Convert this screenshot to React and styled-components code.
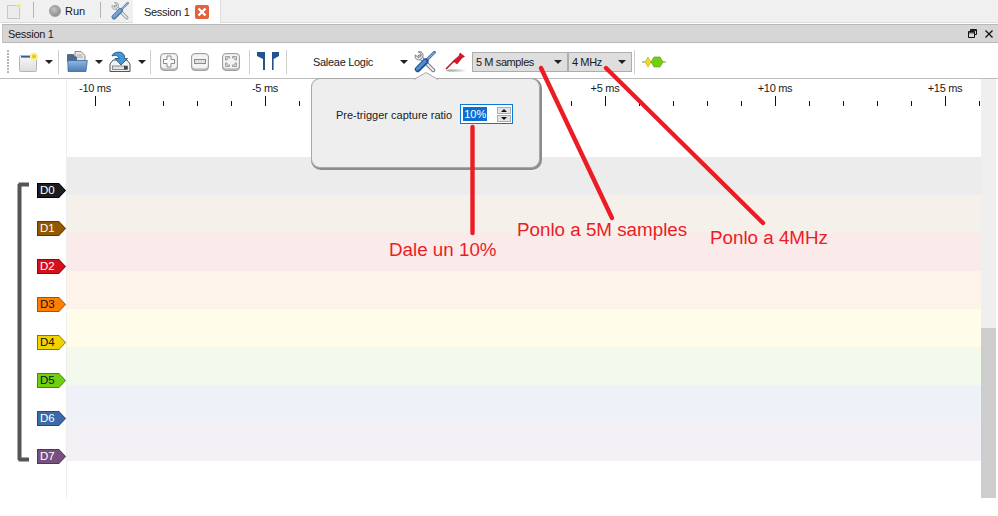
import React from 'react';
import styled, { createGlobalStyle } from 'styled-components';

const GlobalStyle = createGlobalStyle`
  html, body {
    margin: 0;
    padding: 0;
    background: #fff;
  }
  body {
    font-family: "Liberation Sans", Arial, sans-serif;
    font-size: 11px;
    color: #1a1a1a;
  }
`;

const Page = styled.div`
  position: relative;
  width: 998px;
  height: 516px;
  overflow: hidden;
  background: #fff;
`;

/* tab bar */
const TabBar = styled.div`
  display: flex;
  align-items: stretch;
  height: 22px;
  padding-left: 2px;
  background: #f0f0f0;
  border-bottom: 1px solid #dcdcdc;
`;
const TabIcon = styled.div`
  display: flex;
  align-items: center;
  width: ${p => p.$w}px;
  padding-left: ${p => p.$pad || 0}px;
  box-sizing: border-box;
`;
const TabSep = styled.div`
  width: 1px;
  height: 16px;
  margin: 2px 0 0;
  background: #b4b4b4;
`;
const RunTab = styled.div`
  display: flex;
  align-items: center;
  gap: 4px;
  width: 66px;
  padding-left: 15px;
  box-sizing: border-box;
`;
const ActiveTab = styled.div`
  display: flex;
  align-items: center;
  gap: 5px;
  width: 88px;
  height: 23px;
  padding-left: 11px;
  box-sizing: border-box;
  letter-spacing: -0.3px;
  background: #fff;
  border-right: 1px solid #dcdcdc;
`;
const RunDot = styled.span`
  width: 12px;
  height: 12px;
  border-radius: 50%;
  background: radial-gradient(circle at 40% 35%, #c4c4c4, #7c7c7c);
  border: 1px solid #a0a0a0;
  box-sizing: border-box;
`;
const CloseBox = styled.span`
  display: flex;
  align-items: center;
  justify-content: center;
  width: 14px;
  height: 14px;
  border-radius: 2px;
  background: #e2623c;
`;

/* session header */
const SessionBar = styled.div`
  display: flex;
  align-items: center;
  justify-content: space-between;
  height: 17px;
  margin: 1px 0 0 2px;
  padding: 0 5px 0 5px;
  letter-spacing: -0.3px;
  background: #d6d6d6;
  border-top: 1px solid #b8b8b8;
  border-bottom: 1px solid #b8b8b8;
  border-left: 1px solid #c4c4c4;
`;
const WindowBtns = styled.div`
  display: flex;
  align-items: center;
  gap: 8px;
`;

/* toolbar */
const Toolbar = styled.div`
  display: flex;
  align-items: center;
  height: 33px;
  padding-top: 2px;
  border-bottom: 1px solid #bdbdbd;
`;
const Grip = styled.div`
  width: 2px;
  height: 24px;
  margin: 0 10px 0 7px;
  background: repeating-linear-gradient(to bottom, #b5b5b5 0 2px, transparent 2px 3px);
`;
const Slot = styled.div`
  display: flex;
  align-items: center;
  justify-content: center;
  flex: none;
  width: ${p => p.$w}px;
  margin-left: ${p => p.$ml || 0}px;
`;
const Arrow = styled.span`
  flex: none;
  width: 0;
  height: 0;
  margin-left: ${p => p.$ml || 0}px;
  border-left: 4px solid transparent;
  border-right: 4px solid transparent;
  border-top: 4px solid #222;
`;
const ToolSep = styled.div`
  flex: none;
  width: 1px;
  height: 24px;
  margin-left: ${p => p.$ml}px;
  background: #cfcfcf;
`;
const DeviceName = styled.span`
  flex: none;
  width: 87px;
  margin-left: 26px;
  letter-spacing: -0.3px;
`;
const Combo = styled.div`
  display: flex;
  align-items: center;
  justify-content: space-between;
  flex: none;
  width: ${p => p.$w}px;
  height: 20px;
  padding: 0 5px 0 3px;
  box-sizing: border-box;
  letter-spacing: -0.4px;
  background: #dedede;
  border: 1px solid #adadad;
  margin-left: ${p => p.$ml || 0}px;
`;

/* ruler */
const Main = styled.div`
  display: flex;
`;
const Timeline = styled.div`
  width: 981px;
  flex: none;
`;
const Ruler = styled.div`
  display: flex;
  height: 78px;
  padding-left: 78px;
`;
const TickCell = styled.div`
  position: relative;
  flex: none;
  width: 34px;
  &::after {
    content: "";
    position: absolute;
    left: 17px;
    top: ${p => (p.$major ? 17 : 22)}px;
    width: 1px;
    height: ${p => (p.$major ? 10 : 5)}px;
    background: #111;
  }
`;
const TickLabel = styled.span`
  position: absolute;
  top: 3px;
  left: 17px;
  transform: translateX(-50%);
  white-space: nowrap;
  letter-spacing: -0.3px;
`;
const LeftEdge = styled.div`
  position: absolute;
  left: 66px;
  top: 79px;
  bottom: 18px;
  width: 1px;
  background: #eeeeee;
`;
const Row = styled.div`
  display: flex;
  height: 38px;
`;
const TagCell = styled.div`
  flex: none;
  width: 67px;
  padding: 26px 0 0 37px;
  box-sizing: border-box;
  background: #fff;
`;
const Track = styled.div`
  flex: 1;
  background: ${p => p.$bg};
`;
const Tag = styled.div`
  position: relative;
  width: 29px;
  height: 15px;
  line-height: 15px;
  padding-left: 3px;
  box-sizing: border-box;
  font-size: 11.5px;
  color: ${p => p.$text};
  background: ${p => p.$edge};
  clip-path: polygon(0 0, 22px 0, 29px 7.5px, 22px 15px, 0 15px);
  &::before {
    content: "";
    position: absolute;
    inset: 1px;
    background: ${p => p.$fill};
    clip-path: polygon(0 0, 21px 0, 27px 6.5px, 21px 13px, 0 13px);
  }
  span {
    position: relative;
  }
`;
const Scrollbar = styled.div`
  flex: none;
  width: 15px;
  height: 419px;
  background: #efefef;
  display: flex;
  align-items: flex-end;
`;
const Thumb = styled.div`
  width: 100%;
  height: 170px;
  background: #cdcdcd;
`;

/* popup over the toolbar */
const Popup = styled.div`
  position: absolute;
  left: 311px;
  top: 78px;
  width: 229px;
  height: 90px;
  box-sizing: border-box;
  padding: 25px 0 0 24px;
  display: flex;
  align-items: flex-start;
  gap: 8px;
  background: #eeeeee;
  border: 1px solid #a8a8a8;
  border-radius: 9px;
  box-shadow: 1px 1px 0 1px #8c8c8c;
`;
const PopupNotch = styled.svg`
  position: absolute;
  left: 101px;
  top: -7px;
`;
const PopupLabel = styled.span`
  margin-top: 1px;
  line-height: 20px;
`;
const SpinBox = styled.div`
  display: flex;
  align-items: center;
  justify-content: space-between;
  flex: none;
  width: 53px;
  height: 20px;
  padding: 0 1px 0 2px;
  box-sizing: border-box;
  background: #fff;
  border: 1px solid #0a78d7;
`;
const Selected = styled.span`
  padding: 0 1px;
  line-height: 14px;
  color: #fff;
  background: #0a6fd0;
`;
const SpinBtns = styled.div`
  display: flex;
  flex-direction: column;
  gap: 1px;
`;
const SpinBtn = styled.div`
  display: flex;
  align-items: center;
  justify-content: center;
  width: 14px;
  height: 7px;
  background: #e4e4e4;
  border: 1px solid #adadad;
  box-sizing: border-box;
  &::after {
    content: "";
    width: 0;
    height: 0;
    border-left: 3px solid transparent;
    border-right: 3px solid transparent;
    ${p => (p.$up ? 'border-bottom: 3px solid #111;' : 'border-top: 3px solid #111;')}
  }
`;

/* hand drawn annotations */
const Overlay = styled.svg`
  position: absolute;
  left: 0;
  top: 0;
  pointer-events: none;
`;
const Note = styled.span`
  position: absolute;
  left: ${p => p.$x}px;
  top: ${p => p.$y}px;
  font-family: "Liberation Sans", Arial, sans-serif;
  font-size: 18.8px;
  line-height: 22px;
  white-space: nowrap;
  color: #ed1c24;
`;

const Tools = ({ size = 20, faded }) => (
  <svg width={size} height={size} viewBox="0 0 20 20" opacity={faded ? 0.75 : 1}>
    <path d="M5 5 L17.5 17.5" stroke="#767b82" strokeWidth="3.6" strokeLinecap="round" />
    <path d="M5 5 L17.5 17.5" stroke="#eceef0" strokeWidth="1.8" strokeLinecap="round" />
    <path d="M1.2 3.6 L4 6 L6.2 4.8 L6.6 2.4 L3.8 .8 C6.6 -.2 9 2 8 5.4 L5.4 8 C2.4 8.6 .4 6.4 1.2 3.6z" fill="#eceef0" stroke="#767b82" strokeWidth=".9" />
    <path d="M18.6 1.2 L10.6 9.2" stroke="#3c6ca8" strokeWidth="2.6" strokeLinecap="round" />
    <path d="M18.6 1.2 L10.6 9.2" stroke="#8fb6e0" strokeWidth="1" />
    <path d="M10.5 9.5 L3.4 16.6" stroke="#1f4f8e" strokeWidth="5.4" strokeLinecap="round" />
    <path d="M10 9.4 L3.2 16.2" stroke="#4f8bd0" strokeWidth="3" strokeLinecap="round" />
  </svg>
);

const NewIcon = () => (
  <svg width="20" height="20" viewBox="0 0 20 20">
    <defs>
      <linearGradient id="sheetFill" x1="0" y1="0" x2="0" y2="1">
        <stop offset="0" stopColor="#f8f8f8" />
        <stop offset="1" stopColor="#dcdcdc" />
      </linearGradient>
    </defs>
    <rect x=".5" y="3.5" width="17" height="16" rx="1" fill="url(#sheetFill)" stroke="#b4b4b4" />
    <rect x="2" y="4" width="13" height="1.6" fill="#2e5f9e" />
    <circle cx="15" cy="4.5" r="4" fill="#f9f28a" />
    <circle cx="15" cy="4.5" r="2" fill="#e6c81c" />
  </svg>
);

const FolderIcon = () => (
  <svg width="21" height="21" viewBox="0 0 21 21">
    <defs>
      <linearGradient id="folderFill" x1="0" y1="0" x2="0" y2="1">
        <stop offset="0" stopColor="#8fb8e2" />
        <stop offset="1" stopColor="#4c7cb4" />
      </linearGradient>
    </defs>
    <path d="M8 .5 h6 l4 4 v6 h-10z" fill="#e6e6e6" stroke="#7d7d7d" strokeWidth=".9" />
    <path d="M10 4 h5 M10 6 h6" stroke="#9a9a9a" strokeWidth=".8" />
    <path d="M.5 3.5 h6 l1 2.5 h2 v5 h-9z" fill="#4a6a92" stroke="#34506f" strokeWidth=".7" />
    <path d="M.8 9.5 h19.5 l-1.4 11 h-17.8z" fill="url(#folderFill)" stroke="#3c6699" strokeWidth=".8" />
  </svg>
);

const SaveIcon = () => (
  <svg width="22" height="21" viewBox="0 0 22 21">
    <path d="M1 13 L4 9 H18 L21 13 V20.5 H1z" fill="#f2f2f2" stroke="#555" strokeWidth="1" />
    <rect x="3.5" y="15" width="15" height="3.4" fill="#e2e2e2" stroke="#666" strokeWidth=".7" />
    <rect x="15" y="15" width="3.5" height="3.4" fill="#444" />
    <path d="M3 5 C4 .6 14 -1 15.5 5 L15.5 7.5 L18.5 7.5 L12 14 L6 7.5 L10 7.5 C9.6 4.6 6 3.8 3 5z" fill="#4a94cf" stroke="#1f5d92" strokeWidth=".9" />
  </svg>
);

const ZoomBtn = ({ kind }) => (
  <svg width="18" height="18" viewBox="0 0 18 18">
    <rect x=".5" y=".5" width="17" height="17" rx="3.5" fill="#bdbdbd" stroke="#a0a0a0" />
    <rect x="1.2" y="1.2" width="15.6" height="14" rx="3" fill="#f3f3f3" />
    {kind === 'plus' && <path d="M7 3 h4 v3.5 h3.5 v4 H11 V14 H7 v-3.5 H3.5 v-4 H7z" fill="#fafafa" stroke="#8c8c8c" />}
    {kind === 'minus' && <rect x="3.5" y="6.5" width="11" height="4" fill="#dedede" stroke="#8c8c8c" />}
    {kind === 'fit' && (
      <path d="M3.5 7 V3.5 H7.5 V5 H5 V7z M14.5 7 V3.5 H10.5 V5 H13 V7z M3.5 10 V13.5 H7.5 V12 H5 V10z M14.5 10 V13.5 H10.5 V12 H13 V10z" fill="#f0f0f0" stroke="#8c8c8c" strokeWidth=".8" />
    )}
  </svg>
);

const MarkerIcon = () => (
  <svg width="23" height="19" viewBox="0 0 23 19">
    <path d="M0 0 H8 V18 H6 V7 L0 4z" fill="#23538f" />
    <path d="M22 0 H15 V18 H16.6 V7 L22 4z" fill="#23538f" />
  </svg>
);

const ProbeIcon = () => (
  <svg width="22" height="22" viewBox="0 0 22 22">
    <defs>
      <linearGradient id="probeShadow" x1="0" y1="0" x2="1" y2="0">
        <stop offset="0" stopColor="#9a9a9a" />
        <stop offset="1" stopColor="#f2f2f2" />
      </linearGradient>
    </defs>
    <ellipse cx="11" cy="19.5" rx="10" ry="1.3" fill="url(#probeShadow)" />
    <path d="M1 18 L9 10" stroke="#c01020" strokeWidth="1.6" />
    <path d="M8 10 L14 5 L15 2 L19.5 5.5 L17 7 L12 13z" fill="#d81428" stroke="#a80c1c" strokeWidth=".6" />
  </svg>
);

const SignalIcon = () => (
  <svg width="24" height="12" viewBox="0 0 24 12">
    <path d="M0 6 H24" stroke="#6e9a3a" strokeWidth="1" />
    <path d="M3 6 L6 1 L9 6 L6 11z" fill="#eedd22" stroke="#b8a810" strokeWidth=".6" />
    <path d="M9 6 L12 1 H18 L21 6 L18 11 H12z" fill="#70d010" stroke="#4f9a08" strokeWidth=".6" />
  </svg>
);

const SheetIcon = () => (
  <svg width="15" height="16" viewBox="0 0 15 16">
    <rect x=".5" y="2.5" width="12" height="13" fill="#ececec" stroke="#c8c8c8" />
    <circle cx="12" cy="3" r="2" fill="#f4ea80" />
  </svg>
);

const channels = [
  { name: 'D0', edge: '#000', fill: '#1b1e20', text: '#fff', row: '#ececec' },
  { name: 'D1', edge: '#5e3a00', fill: '#925800', text: '#fff', row: '#f5f1ea' },
  { name: 'D2', edge: '#8a0a12', fill: '#d4101c', text: '#fff', row: '#fbeaea' },
  { name: 'D3', edge: '#a85400', fill: '#ff8000', text: '#111', row: '#fdf3ea' },
  { name: 'D4', edge: '#8a7800', fill: '#f0d400', text: '#111', row: '#fffde9' },
  { name: 'D5', edge: '#458a0a', fill: '#70d010', text: '#111', row: '#f3f9ec' },
  { name: 'D6', edge: '#234a7c', fill: '#3a6aa8', text: '#fff', row: '#eef1f7' },
  { name: 'D7', edge: '#523660', fill: '#785080', text: '#fff', row: '#f3f1f5' },
];

const ticks = [];
for (let i = -10; i <= 16; i++) {
  let label = null;
  if (i % 5 === 0) label = i === 0 ? '' : `${i > 0 ? '+' : ''}${i} ms`;
  ticks.push({ id: i, major: i % 5 === 0, label });
}

const App = () => (
  <Page>
    <GlobalStyle />
    <TabBar>
      <TabIcon $w={31} $pad={5}><SheetIcon /></TabIcon>
      <TabSep />
      <RunTab><RunDot />Run</RunTab>
      <TabSep />
      <TabIcon $w={32} $pad={10}><Tools size={18} faded /></TabIcon>
      <ActiveTab>
        Session 1
        <CloseBox>
          <svg width="10" height="10" viewBox="0 0 10 10">
            <path d="M1.5 1.5 L8.5 8.5 M8.5 1.5 L1.5 8.5" stroke="#fff" strokeWidth="2.4" />
          </svg>
        </CloseBox>
      </ActiveTab>
    </TabBar>
    <SessionBar>
      Session 1
      <WindowBtns>
        <svg width="9" height="9" viewBox="0 0 9 9">
          <path d="M2.5 2.5 V.5 H8.5 V5.5 H6.5 M.5 2.5 H6.5 V8.5 H.5z M.5 3.8 H6.5 M2.5 1.6 H8.5" fill="none" stroke="#111" />
        </svg>
        <svg width="8" height="8" viewBox="0 0 8 8">
          <path d="M.5 .5 L7.5 7.5 M7.5 .5 L.5 7.5" stroke="#111" strokeWidth="1.3" />
        </svg>
      </WindowBtns>
    </SessionBar>
    <Toolbar>
      <Grip />
      <NewIcon />
      <Arrow $ml={6} />
      <ToolSep $ml={5} />
      <Slot $w={21} $ml={8}><FolderIcon /></Slot>
      <Arrow $ml={7} />
      <Slot $w={22} $ml={6}><SaveIcon /></Slot>
      <Arrow $ml={7} />
      <ToolSep $ml={4} />
      <Slot $w={18} $ml={9}><ZoomBtn kind="plus" /></Slot>
      <Slot $w={18} $ml={13}><ZoomBtn kind="minus" /></Slot>
      <Slot $w={18} $ml={13}><ZoomBtn kind="fit" /></Slot>
      <ToolSep $ml={9} />
      <Slot $w={23} $ml={7}><MarkerIcon /></Slot>
      <ToolSep $ml={6} />
      <DeviceName>Saleae Logic</DeviceName>
      <Arrow />
      <Slot $w={22} $ml={6}><Tools size={22} /></Slot>
      <Slot $w={22} $ml={9}><ProbeIcon /></Slot>
      <Combo $w={96} $ml={5}>5 M samples<Arrow /></Combo>
      <Combo $w={64}>4 MHz<Arrow /></Combo>
      <ToolSep $ml={2} />
      <Slot $w={24} $ml={7}><SignalIcon /></Slot>
    </Toolbar>
    <Main>
      <Timeline>
        <Ruler>
          {ticks.map(t => (
            <TickCell key={t.id} $major={t.major}>
              {t.label ? <TickLabel>{t.label}</TickLabel> : null}
            </TickCell>
          ))}
        </Ruler>
        {channels.map(c => (
          <Row key={c.name}>
            <TagCell>
              <Tag $edge={c.edge} $fill={c.fill} $text={c.text}><span>{c.name}</span></Tag>
            </TagCell>
            <Track $bg={c.row} />
          </Row>
        ))}
      </Timeline>
      <Scrollbar><Thumb /></Scrollbar>
    </Main>
    <LeftEdge />
    <Popup>
      <PopupNotch width="26" height="8" viewBox="0 0 26 8">
        <path d="M0 8 L13 .5 L26 8z" fill="#eeeeee" />
        <path d="M1 7.5 L13 .5 L25 7.5" fill="none" stroke="#a8a8a8" />
      </PopupNotch>
      <PopupLabel>Pre-trigger capture ratio</PopupLabel>
      <SpinBox>
        <Selected>10%</Selected>
        <SpinBtns><SpinBtn $up /><SpinBtn /></SpinBtns>
      </SpinBox>
    </Popup>
    <Overlay width="998" height="516" viewBox="0 0 998 516">
      <path d="M18.5 184.5 H29 M19.5 184 V460 M18.5 459.5 H29" fill="none" stroke="#555" strokeWidth="4" />
      <g stroke="#ed1c24" strokeWidth="4.4" strokeLinecap="round" fill="none">
        <path d="M472.5 127 V233" />
        <path d="M541 68 L612 218" />
        <path d="M606 68 L763 223" />
      </g>
    </Overlay>
    <Note $x={389} $y={239}>Dale un 10%</Note>
    <Note $x={517} $y={219}>Ponlo a 5M samples</Note>
    <Note $x={710} $y={227}>Ponlo a 4MHz</Note>
  </Page>
);

export default App;
